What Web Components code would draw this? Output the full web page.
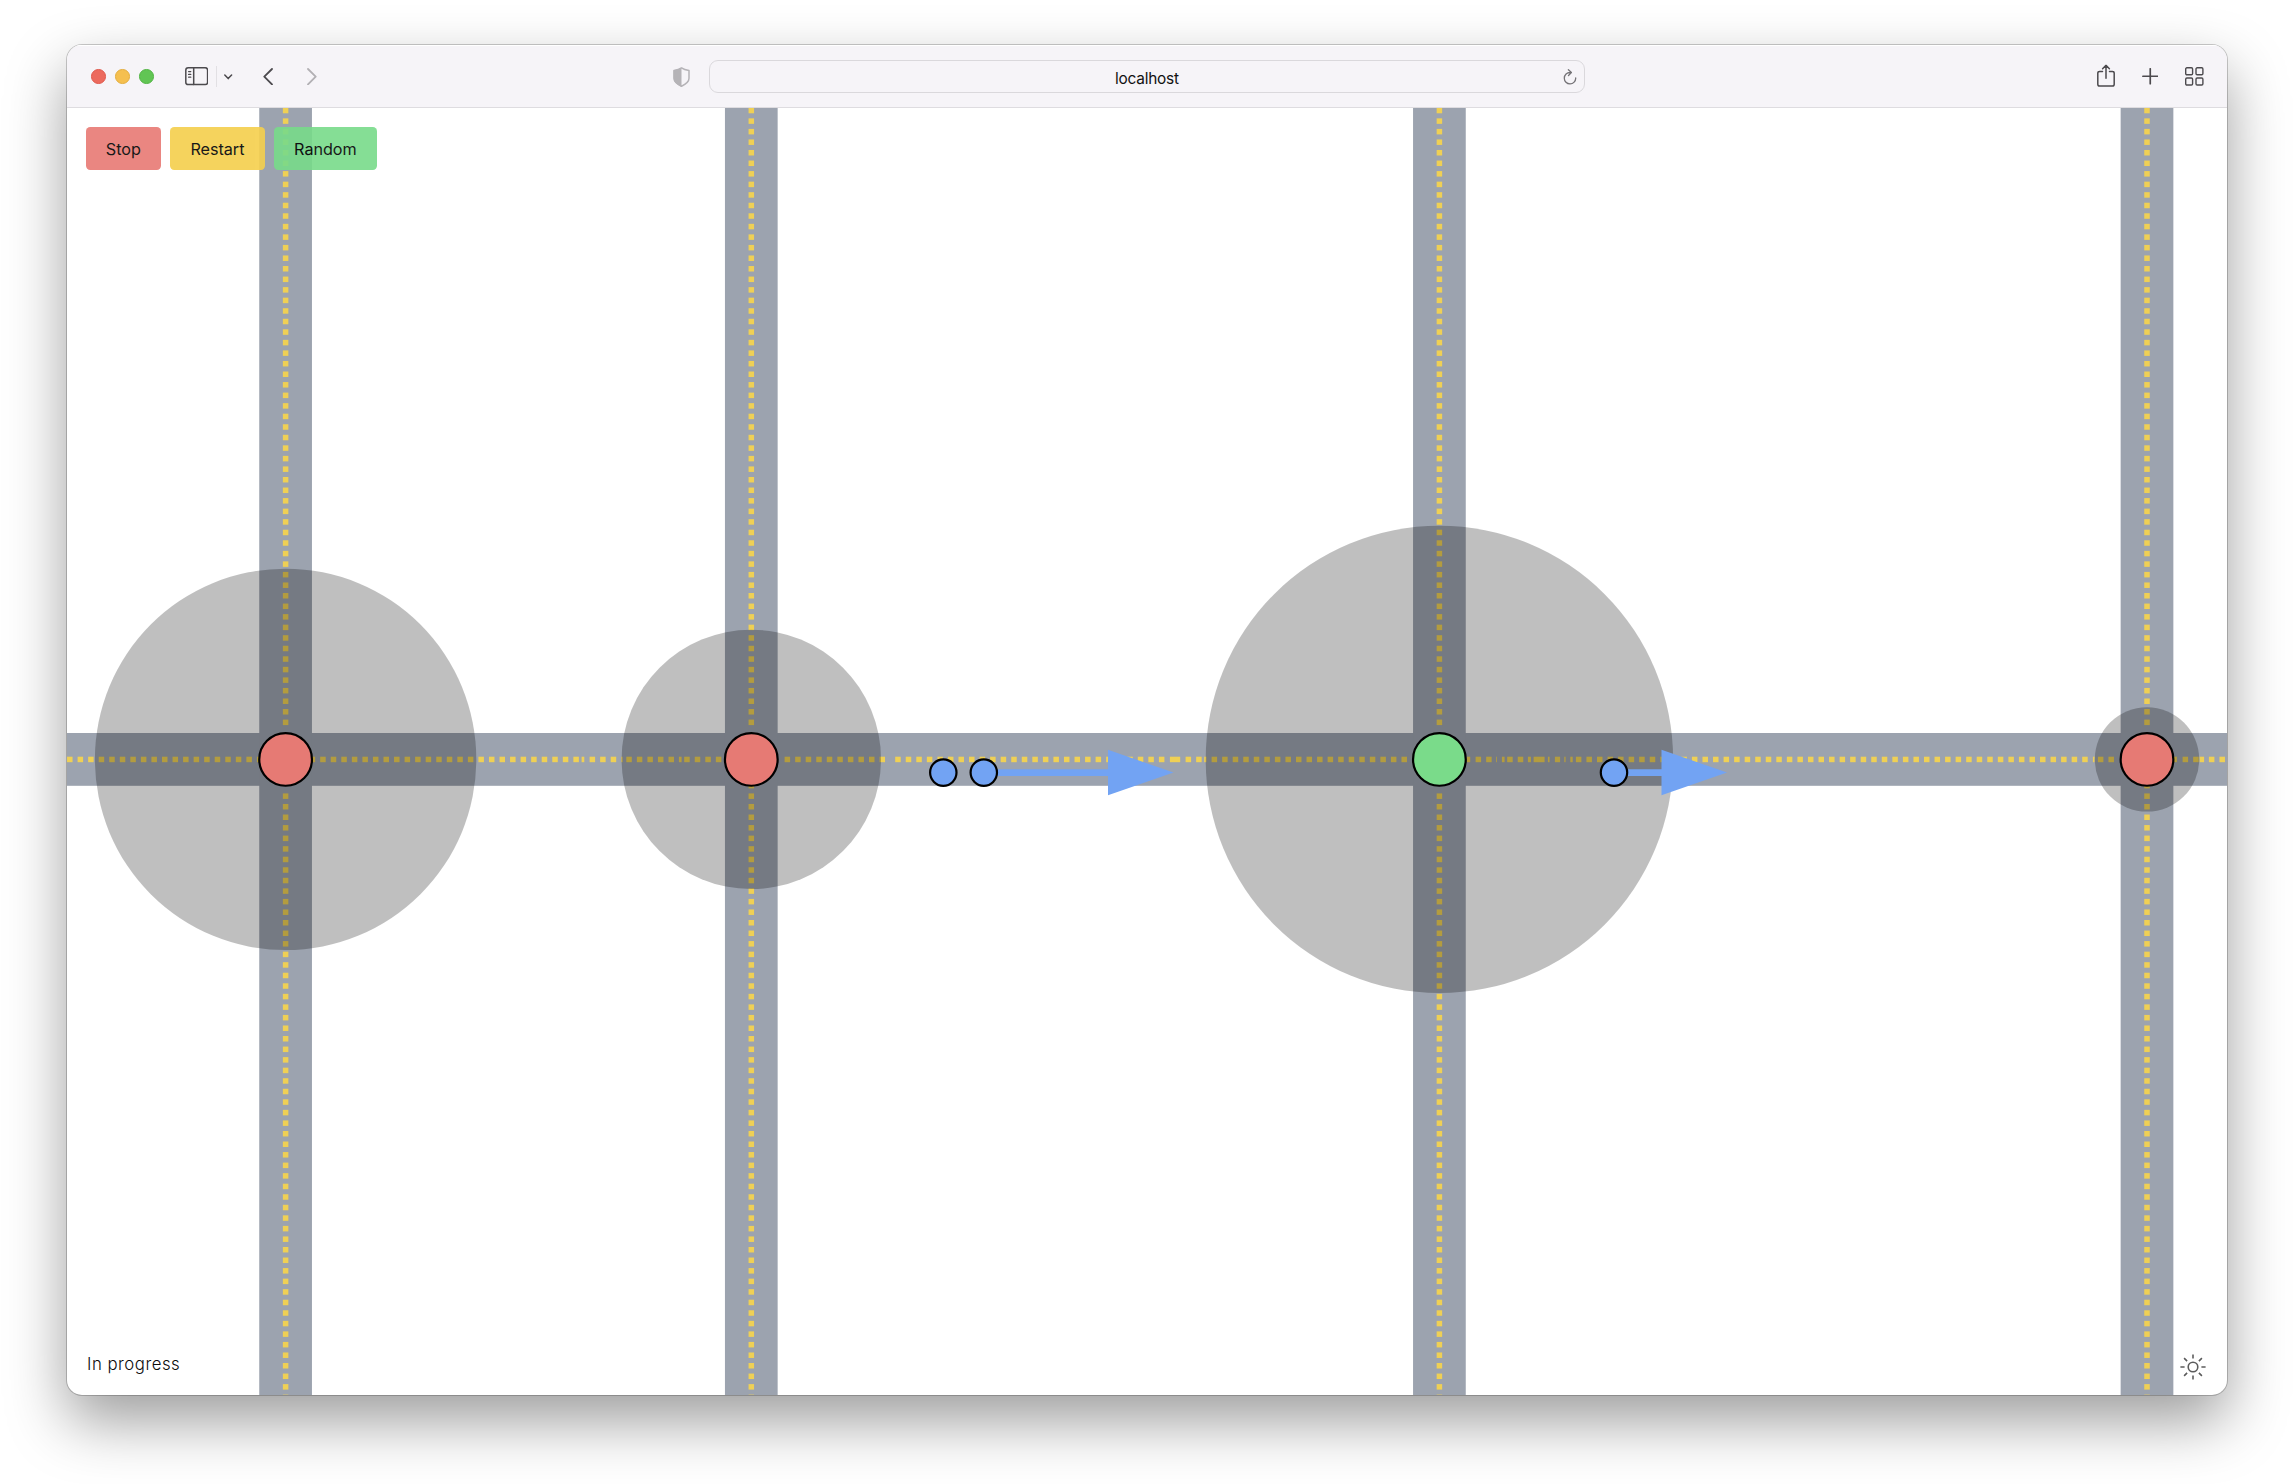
<!DOCTYPE html>
<html lang="en">
<head>
<meta charset="utf-8">
<title>localhost</title>
<style>
html,body{margin:0;height:100%;background:#fff;overflow:hidden}
body{display:flex;font-family:Inter,"Liberation Sans",sans-serif}
</style>
</head>
<body>
<browser-window>
  <browser-toolbar slot="toolbar">localhost</browser-toolbar>
  <traffic-scene>
    <sim-button slot="controls" tone="red" style="width:74.7px">Stop</sim-button>
    <sim-button slot="controls" tone="yellow" style="width:94.3px">Restart</sim-button>
    <sim-button slot="controls" tone="green" style="width:102.4px">Random</sim-button>
    <span slot="status">In progress</span>
  </traffic-scene>
</browser-window>
<script>
const attach = (el, html) => { el.attachShadow({mode: 'open'}).innerHTML = html; };

customElements.define('browser-window', class extends HTMLElement {
  constructor() {
    super();
    attach(this, `<style>
      :host{display:flex;flex:1;box-sizing:border-box;padding:45px 67px 89px}
      main{flex:1;display:flex;flex-direction:column;border-radius:15px;overflow:hidden;background:#fff;
        box-shadow:0 0 0 1px rgba(0,0,0,.2),0 26px 60px rgba(0,0,0,.39)}
      ::slotted(traffic-scene){flex:1}
    </style><main><slot name="toolbar"></slot><slot></slot></main>`);
  }
});

customElements.define('browser-toolbar', class extends HTMLElement {
  constructor() {
    super();
    attach(this, `<style>
      :host{display:block;height:63px;box-sizing:border-box;background:#f6f4f8;border-bottom:1px solid #dedce0;box-shadow:inset 0 1px #fff}
      nav{display:flex;align-items:center;height:100%;padding:1px 23.3px 0 24px;box-sizing:border-box}
      svg{display:block;flex:none;fill:none;stroke:#4c4a4e;stroke-width:1.5;stroke-linecap:round;stroke-linejoin:round}
      i{display:block;box-sizing:border-box;width:14.7px;height:14.7px;border-radius:50%;margin-right:9.4px;flex:none}
      .r{background:#ec6a5e;border:1px solid #e0584c}.y{background:#f5bf4f;border:1px solid #e3ad3e}.g{background:#61c554;border:1px solid #51b443}
      .div{width:1px;height:21px;background:#e2e0e4;margin:0 7px 0 8px;flex:none}
      .bar{display:grid;grid-template-columns:1fr auto 1fr;align-items:center;width:875.5px;height:33.5px;box-sizing:border-box;
        border:1px solid #dad8dc;border-radius:9px;margin-left:19.4px;padding-right:7px;flex:none}
      .bar span{grid-column:2;font-size:15.4px;line-height:20px;color:#111;letter-spacing:-.22px;transform:translate(3.5px,2px)}
      .bar svg{justify-self:end}
      .end{display:flex;align-items:center;margin-left:auto}
    </style><nav>
      <i class="r"></i><i class="y"></i><i class="g"></i>
      <svg style="margin-left:21.6px" width="23.4" height="18.4" viewBox="0 0 23.4 18.4"><rect x=".8" y=".8" width="21.8" height="16.8" rx="2.4"/><path d="M8.7 1v16.4"/><path stroke-width="1.2" d="M3.6 4.6h2.2M3.6 7.4h2.2M3.6 10.2h2.2"/></svg>
      <b class="div"></b>
      <svg width="8.4" height="6" viewBox="0 0 8.4 6"><path d="M.8 1l3.4 3.6L7.6 1"/></svg>
      <svg style="margin-left:30.6px" width="10" height="17.4" viewBox="0 0 10 17.4"><path stroke-width="1.8" d="M9 1L1.3 8.7 9 16.4"/></svg>
      <svg style="margin-left:33.3px" width="10" height="17.4" viewBox="0 0 10 17.4"><path stroke="#b2b0b4" stroke-width="1.8" d="M1 1l7.7 7.7L1 16.4"/></svg>
      <svg style="margin-left:356.3px" width="17" height="20" viewBox="0 0 17 20"><path stroke="#b5b3b7" d="M8.5.9C6.5 2.3 4 3.1 1 3.6v7.6c0 3.6 3.3 6 7.5 8 4.2-2 7.5-4.4 7.5-8V3.6C13 3.1 10.5 2.3 8.5.9z"/><path stroke="none" fill="#b5b3b7" d="M8.500.4C6.500 1.800 4 2.600.6 3.200v8c0 3.800 3.400 6.300 7.900 8.500z"/></svg>
      <div class="bar"><span><slot></slot></span>
        <svg width="14" height="16" viewBox="0 0 14 16"><path stroke="#757377" stroke-width="1.3" d="M7.200 3.500A5.700 5.700 0 1 0 12.700 9M5.400.8l3 2.800-2.900 2.900"/></svg></div>
      <div class="end">
        <svg style="transform:translateY(-.7px)" width="18" height="23" viewBox="0 0 18 23"><path d="M5.500 7.300H2.600Q.8 7.300.8 9v11q0 1.800 1.800 1.800h12.800q1.800 0 1.800-1.800V9q0-1.700-1.800-1.700h-2.900M9 14V1.200M5.600 4.400L9 1l3.400 3.400"/></svg>
        <svg style="margin-left:26.900px" width="16.500" height="16.500" viewBox="0 0 16.500 16.500"><path stroke-width="1.700" d="M8.250.8v14.900M.8 8.250h14.900"/></svg>
        <svg style="margin-left:27.100px" width="18.600" height="18.800" viewBox="0 0 18.600 18.800"><g stroke-width="1.400"><rect x=".7" y=".8" width="6.900" height="7" rx="1.200"/><rect x="11" y=".8" width="6.900" height="7" rx="1.200"/><rect x=".7" y="11" width="6.900" height="7" rx="1.200"/><rect x="11" y="11" width="6.900" height="7" rx="1.200"/></g></svg>
      </div>
    </nav>`);
  }
});

customElements.define('sim-button', class extends HTMLElement {
  constructor() {
    super();
    attach(this, `<style>
      :host{display:block;height:43px;opacity:.9}
      button{all:unset;box-sizing:border-box;display:flex;align-items:center;justify-content:center;width:100%;height:100%;
        border-radius:4.200px;font-size:16.200px;letter-spacing:-.05px;color:#000;background:var(--c)}
      :host([tone=red]){--c:#e87a74}:host([tone=yellow]){--c:#f5cf4c}:host([tone=green]){--c:#78db8a}
    </style><button><slot></slot></button>`);
  }
});

customElements.define('traffic-scene', class extends HTMLElement {
  constructor() {
    super();
    const P = 10.548, D = 5.5, CY = 759.4, YELLOW = '#efd055';
    // Vertical roads: centre, sensing radius, light colour, first lane mark below the junction
    const roads = [[285.600, 190.700, '#e67a74', 65], [751.300, 129.700, '#e67a74', 64], [1439.400, 233.700, '#7adb8a', 65], [2147, 52.200, '#e67a74', 64]];
    let out = `<rect x="60" y="733" width="2180" height="52.800" fill="#9ca3af"/>`;
    for (const [x] of roads) out += `<rect x="${x - 26.350}" y="100" width="52.700" height="1300" fill="#9ca3af"/>`;
    out += `<g fill="${YELLOW}">`;
    for (const [x, , , first] of roads)
      for (let k = 0; k < 124; k++)
        if (k < 59 || k >= first) out += `<rect x="${x - D / 2}" y="${(107.800 + k * P).toFixed(2)}" width="${D}" height="${D}"/>`;
    // Horizontal lane marks: [start, count, width]
    const runs = [[67.150,49],[581.700,1,2.700],[589.700,3],[621.500,1,1.200],[626.400,5],[679,1,2.700],[684.300,4],[784.700,10],[895.300,26],
      [1170,1,10.300],[1185.700,2],[1204.300,1,2.200],[1211.700,19],[1467,1,3.300],[1475.700,2],[1496.300,1,.8],[1502,1,2.700],[1507.300,2],
      [1528,1,3],[1533.700,1,11],[1548,1,1.700],[1555,1,5.200],[1564.400,1,1.300],[1570.400,1,2.400],[1576,49],[2093,1,1.700],[2098,2],
      [2172,1,5],[2182.700,2],[2199.700,1,4.500],[2209,2]];
    for (const [s, n, w = D] of runs)
      for (let i = 0; i < n; i++) out += `<rect x="${(s - .1 + i * P).toFixed(2)}" y="${756.700}" width="${w}" height="${D}"/>`;
    out += '</g>';
    for (const [x, r] of roads) out += `<circle cx="${x}" cy="${CY}" r="${r}" fill="#000" fill-opacity=".25"/>`;
    for (const [x, , c] of roads) out += `<circle cx="${x}" cy="${CY}" r="26.350" fill="${c}" stroke="#000" stroke-width="2.200"/>`;
    for (const [a, b] of [[984, 1108], [1614, 1661.500]])
      out += `<path fill="#72a3f3" d="M${a} 769.300H${b}V749.700L${b + 65.500} 772.600L${b} 795.300V776H${a}z"/>`;
    for (const x of [943.300, 983.800, 1614]) out += `<circle cx="${x}" cy="772.600" r="13.200" fill="#72a3f3" stroke="#000" stroke-width="2.200"/>`;

    attach(this, `<style>
      :host{display:grid;min-height:0}
      .map,.over{grid-area:1/1;min-height:0;min-width:0}
      .map{width:2160px;height:100%;display:block}
      .over{position:relative;display:flex;flex-direction:column;justify-content:space-between;padding:19px 21.200px 15.500px 19px}
      .row{display:flex}.controls{gap:9.600px}
      .foot{justify-content:space-between;align-items:flex-end}
      .status{font-size:16.800px;line-height:24px;font-weight:300;color:#0c0c0c;letter-spacing:.5px;padding:0 0 4px 1px}
      .sun{width:26px;height:26px;fill:none;stroke:#5c5c5c;stroke-width:1.600}
    </style>
    <svg class="map" viewBox="67 108 2160 1287" preserveAspectRatio="xMinYMin slice">${out}</svg>
    <div class="over">
      <div class="row controls"><slot name="controls"></slot></div>
      <div class="row foot"><div class="status"><slot name="status"></slot></div>
        <svg class="sun" viewBox="-13 -13 26 26"><circle r="4.800"/><path d="M0-8.400V-12.600M0 8.400V12.600M-8.400 0H-12.600M8.400 0H12.600M-5.900-5.900L-8.900-8.900M5.900-5.900L8.900-8.900M-5.900 5.900L-8.900 8.900M5.900 5.900L8.900 8.900"/></svg>
      </div>
    </div>`);
  }
});
</script>
</body>
</html>
